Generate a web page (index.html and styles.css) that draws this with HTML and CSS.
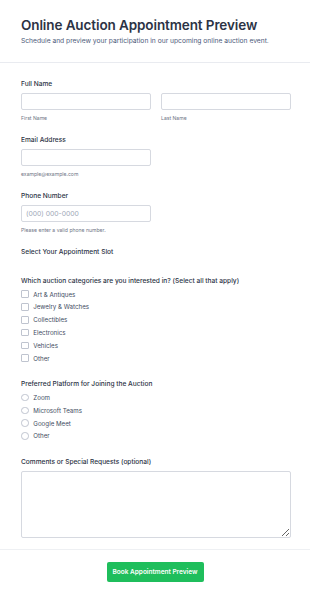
FILE: index.html
```html
<!DOCTYPE html>
<html lang="en">
<head>
<meta charset="utf-8">
<title>Online Auction Appointment Preview</title>
<link rel="stylesheet" href="styles.css">
</head>
<body>
<header class="header">
  <h1 class="title">Online Auction Appointment Preview</h1>
  <p class="subtitle">Schedule and preview your participation in our upcoming online auction event.</p>
</header>
<form class="form">
  <div class="field">
    <label class="label">Full Name</label>
    <div class="name-row">
      <div class="name-col">
        <input class="input" type="text">
        <span class="sublabel">First Name</span>
      </div>
      <div class="name-col">
        <input class="input" type="text">
        <span class="sublabel">Last Name</span>
      </div>
    </div>
  </div>
  <div class="field">
    <label class="label">Email Address</label>
    <input class="input input-half" type="email">
    <span class="sublabel">example@example.com</span>
  </div>
  <div class="field">
    <label class="label">Phone Number</label>
    <input class="input input-half" type="tel" placeholder="(000) 000-0000">
    <span class="sublabel">Please enter a valid phone number.</span>
  </div>
  <div class="field field-slot">
    <label class="label">Select Your Appointment Slot</label>
  </div>
  <div class="field field-options">
    <label class="label">Which auction categories are you interested in? (Select all that apply)</label>
    <div class="options">
      <label class="option"><span class="box"></span>Art &amp; Antiques</label>
      <label class="option"><span class="box"></span>Jewelry &amp; Watches</label>
      <label class="option"><span class="box"></span>Collectibles</label>
      <label class="option"><span class="box"></span>Electronics</label>
      <label class="option"><span class="box"></span>Vehicles</label>
      <label class="option"><span class="box"></span>Other</label>
    </div>
  </div>
  <div class="field field-options">
    <label class="label">Preferred Platform for Joining the Auction</label>
    <div class="options">
      <label class="option"><span class="circle"></span>Zoom</label>
      <label class="option"><span class="circle"></span>Microsoft Teams</label>
      <label class="option"><span class="circle"></span>Google Meet</label>
      <label class="option"><span class="circle"></span>Other</label>
    </div>
  </div>
  <div class="field field-comments">
    <label class="label">Comments or Special Requests (optional)</label>
    <textarea class="textarea"></textarea>
  </div>
</form>
<footer class="footer">
  <button class="button" type="button">Book Appointment Preview</button>
</footer>
</body>
</html>
```
FILE: styles.css
```css
* { box-sizing: border-box; }
html, body { margin: 0; padding: 0; background: #ffffff; }
body {
  font-family: Inter, "Noto Sans", "Liberation Sans", sans-serif;
  color: #2c3345;
}
.header {
  padding: 17px 21px 16px;
  border-bottom: 1px solid #e9ebf0;
}
.title {
  margin: 0 0 3px;
  font-size: 13.5px;
  line-height: 16px;
  font-weight: 600;
  color: #2c3345;
  letter-spacing: -0.1px;
}
.subtitle {
  margin: 0;
  font-size: 6.7px;
  line-height: 10px;
  color: #4c5a7a;
}
.form {
  padding: 16px 19px 0 21px;
}
.field {
  margin-bottom: 13.5px;
}
.label {
  display: block;
  font-size: 6.6px;
  line-height: 10px;
  font-weight: 500;
  color: #2c3345;
  margin-bottom: 4px;
}
.name-row {
  display: flex;
  gap: 10px;
}
.name-col {
  flex: 1;
  display: flex;
  flex-direction: column;
}
.input {
  display: block;
  width: 100%;
  height: 17px;
  margin: 0;
  padding: 0 4px;
  border: 1px solid #d6d9e0;
  border-radius: 2px;
  font-family: inherit;
  font-size: 6.8px;
  color: #2c3345;
  background: #fff;
}
.input::placeholder { color: #a0a8b8; }
.input-half { width: 130px; }
.sublabel {
  display: block;
  margin-top: 3.5px;
  font-size: 5.1px;
  line-height: 8px;
  color: #6f7686;
}
.field-slot {
  margin-bottom: 0;
  height: 28.5px;
}
.field-options { margin-bottom: 14.3px; }
.field-options .label { margin-bottom: 2.3px; }
.options {
  display: flex;
  flex-direction: column;
}
.option {
  display: flex;
  align-items: center;
  height: 12.8px;
  font-size: 6.2px;
  color: #414b62;
}
.box {
  width: 7.5px;
  height: 7.5px;
  border: 1px solid #bfc4cf;
  border-radius: 1px;
  margin-right: 4.8px;
  background: #fff;
}
.circle {
  width: 7.5px;
  height: 7.5px;
  border: 1px solid #bfc4cf;
  border-radius: 50%;
  margin-right: 4.8px;
  background: #fff;
}
.field-comments { margin-bottom: 0; }
.field-comments .label { margin-bottom: 4.7px; }
.textarea {
  display: block;
  width: 100%;
  height: 67px;
  margin: 0;
  border: 1px solid #d6d9e0;
  border-radius: 2px;
  font-family: inherit;
  font-size: 7px;
  resize: vertical;
}
.footer {
  margin-top: 11px;
  border-top: 1px solid #eef0f3;
  padding-top: 12px;
  display: flex;
  justify-content: center;
}
.button {
  width: 97px;
  height: 20px;
  border: none;
  border-radius: 2px;
  background: #1fbe5c;
  color: #ffffff;
  font-family: inherit;
  font-size: 6.5px;
  font-weight: 600;
  padding: 0;
}
```
